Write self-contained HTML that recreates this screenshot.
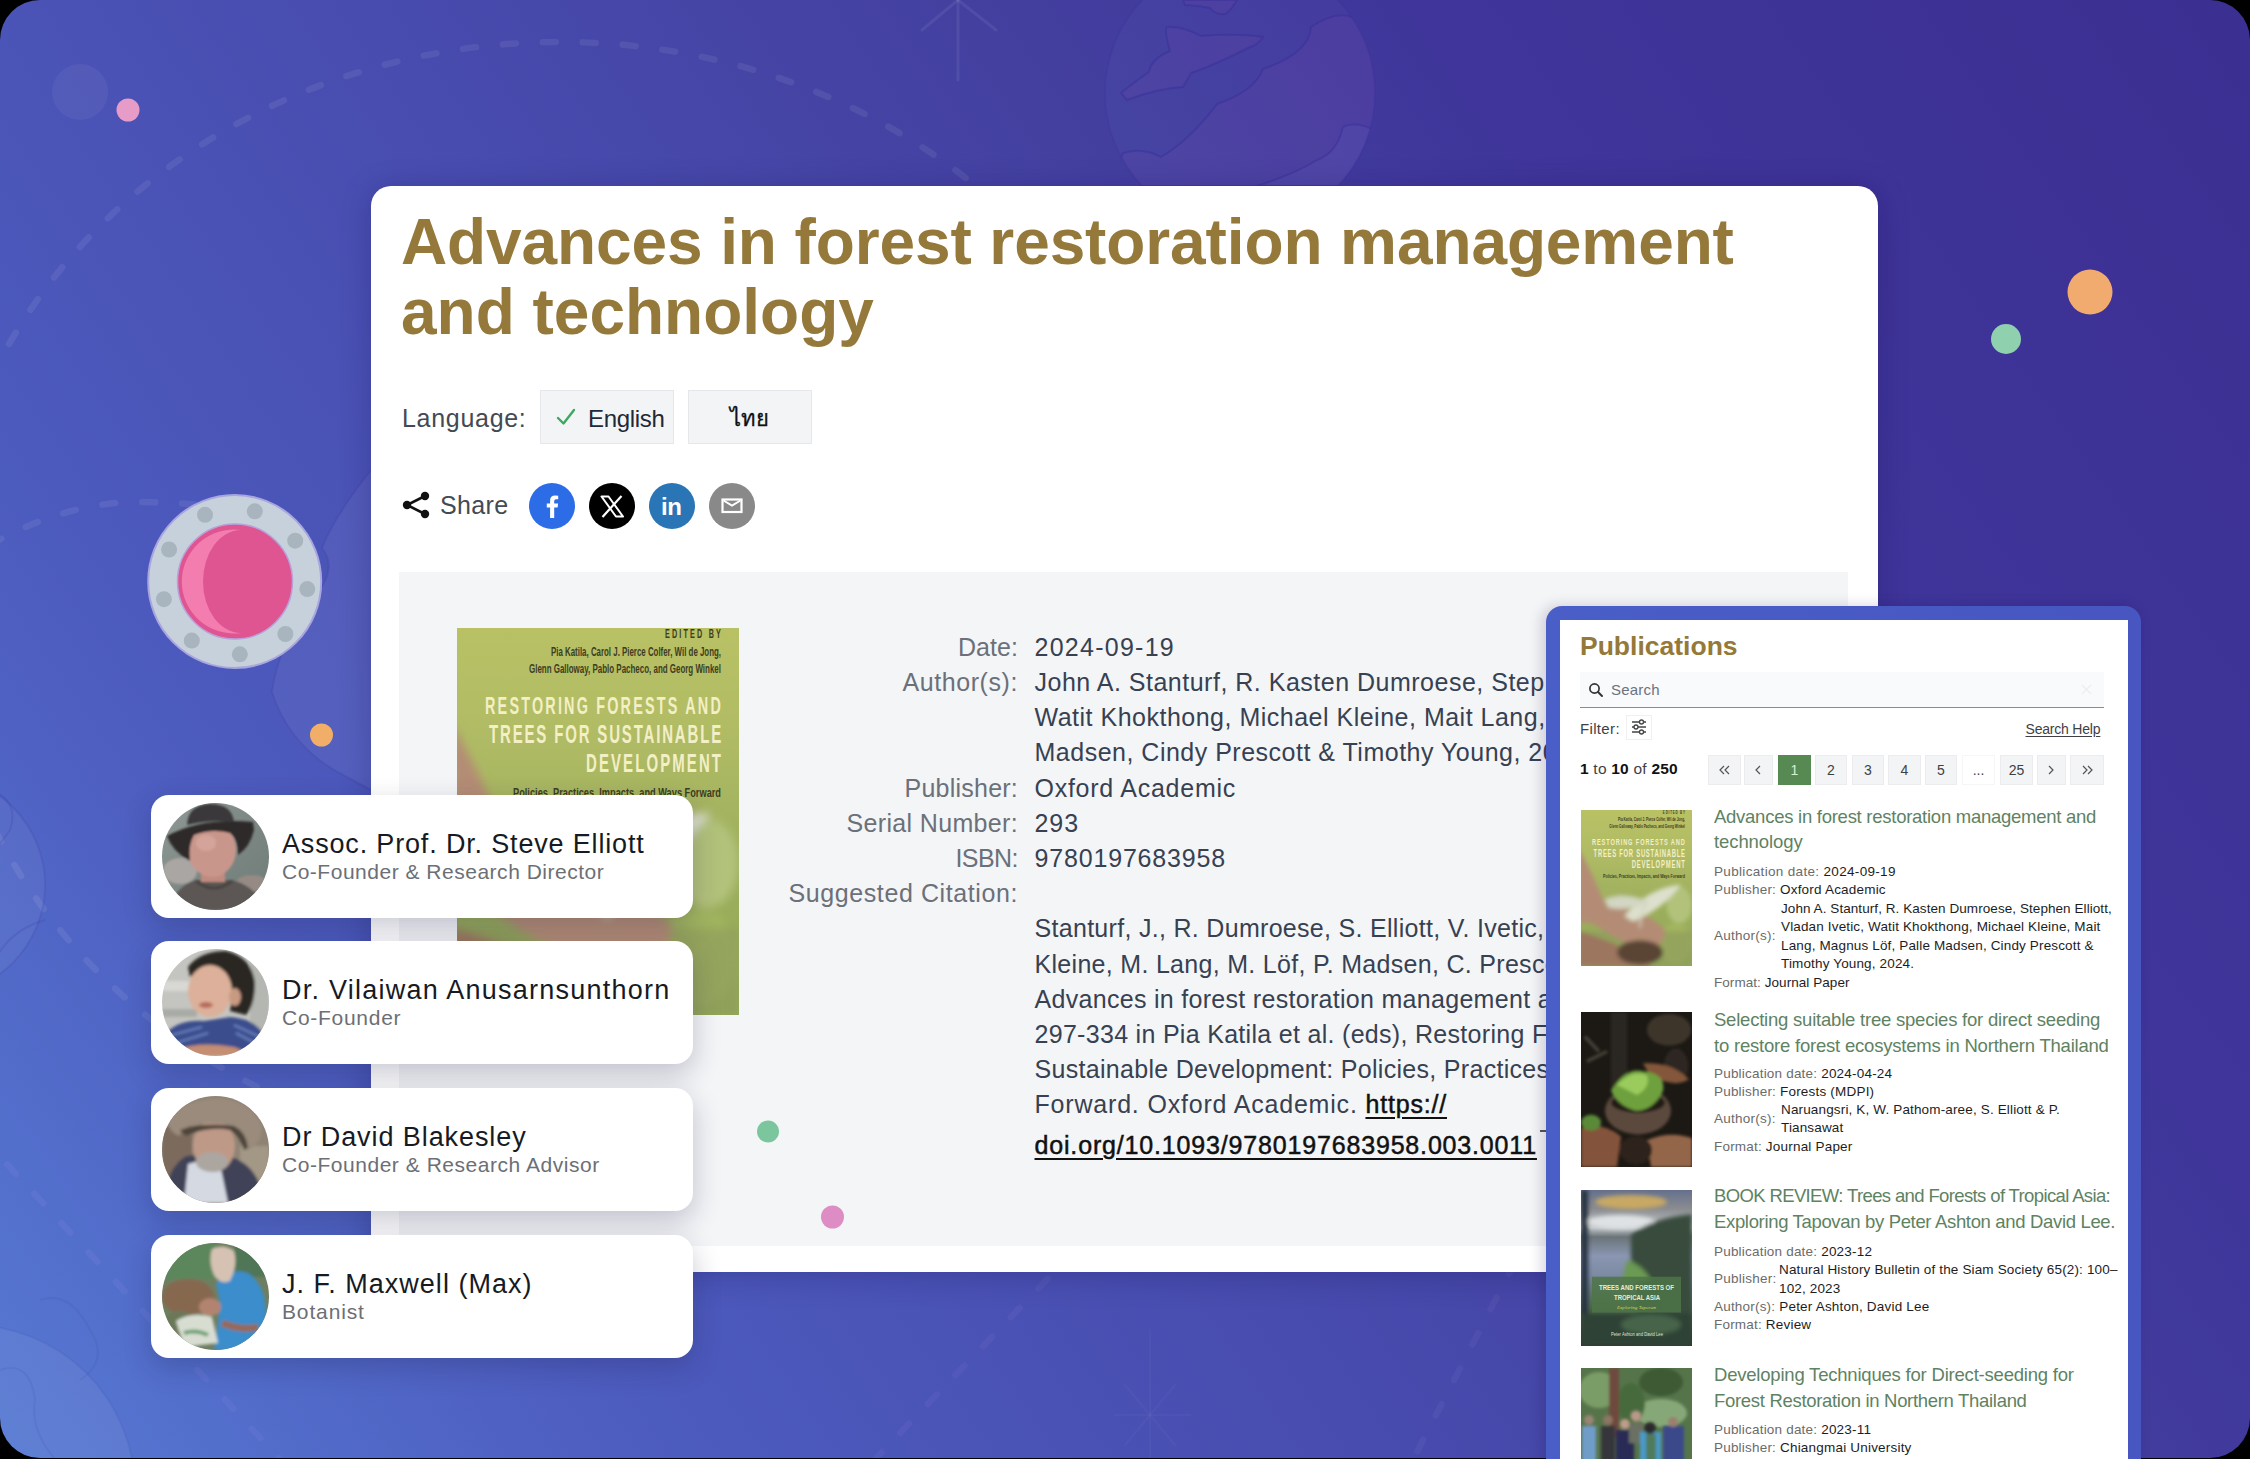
<!DOCTYPE html>
<html><head><meta charset="utf-8"><title>Advances in forest restoration management and technology</title>
<style>
html,body{margin:0;padding:0;}
body{width:2250px;height:1459px;overflow:hidden;background:#000;position:relative;font-family:"Liberation Sans",sans-serif;}
.abs{position:absolute;}
.t{position:absolute;line-height:1;white-space:nowrap;}
#bg{position:absolute;left:0;top:0;width:2250px;height:1458px;border-radius:40px;overflow:hidden;
 background:linear-gradient(55deg,#5679d3 0%,#4d5cbf 20%,#4a52b5 33%,#433f9f 62%,#3f359a 75%,#3c2f92 100%);}
#card{position:absolute;left:371px;top:186px;width:1507px;height:1086px;background:#fff;border-radius:20px;box-shadow:0 4px 30px rgba(20,10,80,.25);}
#grey{position:absolute;left:399px;top:572px;width:1449px;height:674px;background:#f4f5f7;}
.pcard{position:absolute;left:151px;width:542px;height:123px;background:#fff;border-radius:18px;box-shadow:0 10px 28px rgba(30,30,70,.24);z-index:5;}
.av{position:absolute;left:11px;top:8px;width:107px;height:107px;border-radius:50%;overflow:hidden;}
#pubs{position:absolute;left:1546px;top:606px;width:595px;height:900px;background:linear-gradient(90deg,#4a5ec8,#4756c0);border-radius:16px;box-shadow:-4px 0 14px rgba(20,10,60,.18);z-index:5;}
#pubsin{position:absolute;left:14px;top:14px;width:568px;height:900px;background:#fff;}
.btn{position:absolute;background:#f3f4f6;border:1px solid #e5e7eb;box-sizing:border-box;}
.circ{position:absolute;width:46px;height:46px;border-radius:50%;top:483px;}
.pg{position:absolute;top:755px;height:30px;background:#f3f4f6;box-sizing:border-box;border:1px solid #ececee;font-size:14px;color:#3f3f46;text-align:center;line-height:29px;z-index:6;}
.thumb{position:absolute;left:1580.5px;width:111px;z-index:6;overflow:hidden;}
</style></head>
<body>
<div id="bg"><svg class="abs" style="left:0;top:0" width="2250" height="1459" viewBox="0 0 2250 1459">
<g fill="none" stroke="rgba(255,255,255,0.075)" stroke-width="6.5" stroke-linecap="round">
<ellipse cx="560" cy="600" rx="620" ry="558" stroke-dasharray="13 27"/>
<path d="M-10 545 Q60 505 130 502 Q170 502 200 505" stroke-dasharray="13 27"/>
<path d="M-20 1135 L290 1470" stroke="rgba(230,190,255,0.06)" stroke-dasharray="13 27"/>
<path d="M1075 1250 L860 1475" stroke="rgba(230,190,255,0.05)" stroke-dasharray="13 27"/>
<path d="M1515 1262 L1405 1475" stroke="rgba(230,190,255,0.05)" stroke-dasharray="13 27"/>
</g>
<circle cx="80" cy="92" r="28" fill="rgba(255,255,255,0.05)"/>
<circle cx="128" cy="110" r="11.5" fill="#e79cc8"/>
<circle cx="2090" cy="292" r="22.5" fill="#f2ab6e"/>
<circle cx="2006" cy="339" r="15" fill="#8fd0af"/>
<circle cx="321.5" cy="735" r="11.5" fill="#f1aa60"/>
<!-- star top -->
<g stroke="rgba(255,255,255,0.07)" stroke-width="3" stroke-linecap="round">
<path d="M958 -10 L958 80"/><path d="M958 0 L922 30"/><path d="M958 0 L996 30"/>
</g>
<g stroke="rgba(255,255,255,0.025)" stroke-width="2.5" stroke-linecap="round">
<path d="M1150 1330 L1150 1459"/><path d="M1115 1415 L1190 1415"/><path d="M1125 1385 L1175 1445"/><path d="M1175 1385 L1125 1445"/>
</g>
<!-- globe top -->
<defs><clipPath id="gclip"><circle cx="1240" cy="93" r="135"/></clipPath></defs>
<g clip-path="url(#gclip)">
<circle cx="1240" cy="93" r="135" fill="rgba(110,130,220,0.08)"/>
<path d="M1121 93 Q1137 80 1149 72 Q1151 59 1170 51 Q1164 30 1167 27 Q1183 26 1201 36 Q1237 33 1263 37 Q1258 45 1250 47 Q1217 64 1191 73 Q1183 87 1183 87 Q1159 88 1127 100 Z" fill="rgba(150,80,180,0.10)" stroke="rgba(50,35,150,0.30)" stroke-width="2"/>
<path d="M1110 186 L1123 153 Q1143 147 1161 157 Q1190 140 1217 104 Q1255 91 1263 69 Q1310 53 1311 27 Q1341 7 1358 21 Q1370 40 1380 60 L1380 186 Z" fill="rgba(150,80,180,0.10)" stroke="rgba(50,35,150,0.30)" stroke-width="2"/>
<path d="M1257 186 Q1297 173 1317 160 Q1337 153 1343 127 Q1357 120 1380 133 L1380 186 Z" fill="rgba(110,130,220,0.10)" stroke="rgba(50,35,150,0.30)" stroke-width="2"/>
<path d="M1183 0 L1237 0 Q1230 12 1225 14 Q1215 15 1210 8 Q1195 5 1185 5 Z" fill="rgba(150,80,180,0.10)" stroke="rgba(50,35,150,0.30)" stroke-width="2"/>
</g>
<circle cx="1240" cy="93" r="135" fill="none" stroke="rgba(60,50,160,0.20)" stroke-width="2"/>
<!-- globe left mid behind porthole -->
<path d="M375 465 Q335 515 322 548 Q338 568 316 595 Q278 645 272 692 Q290 748 345 776 L375 792 Z" fill="rgba(255,255,255,0.05)" stroke="rgba(60,50,150,0.18)" stroke-width="2"/>
<!-- globe left -->
<g>
<circle cx="-65" cy="885" r="110" fill="rgba(255,255,255,0.05)" stroke="rgba(60,60,160,0.18)" stroke-width="2"/>
<path d="M-10 790 Q20 800 10 830 Q-5 850 -10 860" fill="none" stroke="rgba(60,60,160,0.2)" stroke-width="2"/>
<path d="M45 920 Q10 930 -5 960" fill="none" stroke="rgba(60,60,160,0.2)" stroke-width="2"/>
</g>
<g>
<circle cx="-30" cy="1490" r="165" fill="rgba(255,255,255,0.06)" stroke="rgba(60,80,170,0.15)" stroke-width="2"/>
<path d="M0 1370 Q30 1360 35 1400 Q30 1430 55 1459" fill="none" stroke="rgba(60,80,170,0.15)" stroke-width="2"/>
<path d="M40 1300 Q70 1290 90 1330 Q110 1360 80 1380" fill="none" stroke="rgba(60,80,170,0.15)" stroke-width="2"/>
</g>
</svg></div>
<svg class="abs" style="left:0;top:0" width="2250" height="1459" viewBox="0 0 2250 1459">
<circle cx="234.7" cy="581.5" r="86.5" fill="#c6d1db" stroke="#a9a6df" stroke-width="2"/>
<circle cx="205.0" cy="514.8" r="8" fill="#a8b5be"/><circle cx="254.8" cy="511.3" r="8" fill="#a8b5be"/><circle cx="295.2" cy="540.7" r="8" fill="#a8b5be"/><circle cx="307.3" cy="589.1" r="8" fill="#a8b5be"/><circle cx="285.4" cy="634.0" r="8" fill="#a8b5be"/><circle cx="239.8" cy="654.3" r="8" fill="#a8b5be"/><circle cx="191.8" cy="640.6" r="8" fill="#a8b5be"/><circle cx="163.9" cy="599.2" r="8" fill="#a8b5be"/><circle cx="169.1" cy="549.5" r="8" fill="#a8b5be"/>
<circle cx="235" cy="581.5" r="57.5" fill="#df5591" stroke="#b8a0d8" stroke-width="1.5"/>
<path d="M241 530 A52 52 0 1 0 241 633 A38 51.5 0 0 1 241 530 Z" fill="#f37daf"/>
</svg>
<div id="card"></div><div id="grey"></div>
<div class="btn" style="left:540px;top:390px;width:134px;height:54px"></div>
<svg class="abs" style="left:555px;top:407px" width="22" height="20" viewBox="0 0 22 20"><path d="M3 11 L8.5 16.5 L19 3" fill="none" stroke="#3da85f" stroke-width="2.4" stroke-linecap="round" stroke-linejoin="round"/></svg>
<div class="btn" style="left:688px;top:390px;width:124px;height:54px"></div>
<div class="t" style="left:730px;top:408px;font-size:22px;color:#111;-webkit-text-stroke:0.3px #111">ไทย</div>
<svg class="abs" style="left:401px;top:490px" width="30" height="30" viewBox="0 0 30 30"><g fill="#111"><circle cx="24" cy="6" r="4.2"/><circle cx="6" cy="15" r="4.2"/><circle cx="24" cy="24" r="4.2"/></g><path d="M24 6 L6 15 L24 24" fill="none" stroke="#111" stroke-width="2.6"/></svg>
<div class="circ" style="left:529px;background:#2c6ce6"></div>
<svg class="abs" style="left:529px;top:483px" width="46" height="46" viewBox="0 0 46 46"><path d="M25.2 35 V24.5 H28.6 L29.1 20.5 H25.2 V18 Q25.2 16.3 27.1 16.3 H29.2 V12.7 Q27.7 12.5 26.2 12.5 Q21.1 12.5 21.1 17.6 V20.5 H17.8 V24.5 H21.1 V35 Z" fill="#fff"/></svg>
<div class="circ" style="left:589px;background:#000"></div>
<svg class="abs" style="left:589px;top:483px" width="46" height="46" viewBox="0 0 46 46"><path d="M12.5 13.5 L19.5 13.5 L34 33.5 L27 33.5 Z" fill="none" stroke="#fff" stroke-width="2" stroke-linejoin="round"/><path d="M32.5 13 L13.5 34" stroke="#fff" stroke-width="2.2"/></svg>
<div class="circ" style="left:649px;background:#2a75b6"></div>
<div class="t" style="left:661px;top:494.5px;font-size:24px;color:#fff;font-weight:bold;letter-spacing:-0.5px">in</div>
<div class="circ" style="left:709px;background:#898989"></div>
<svg class="abs" style="left:709px;top:483px" width="46" height="46" viewBox="0 0 46 46"><rect x="13.5" y="16.5" width="19" height="12.5" fill="none" stroke="#fff" stroke-width="2.2"/><path d="M14.5 17.5 L23 22.5 L31.5 17.5" fill="none" stroke="#fff" stroke-width="2"/></svg>
<div class="abs" style="left:457px;top:628px;width:282px;height:387px"><svg width="100%" height="100%" viewBox="0 0 282 387" preserveAspectRatio="none">
<defs>
<linearGradient id="c1g" x1="0" y1="0" x2="0" y2="1">
<stop offset="0" stop-color="#b9c164"/><stop offset="0.3" stop-color="#afbb64"/><stop offset="0.6" stop-color="#9cae5c"/><stop offset="1" stop-color="#94aa58"/></linearGradient>
<filter id="c1b"><feGaussianBlur stdDeviation="5"/></filter>
<filter id="c1b2"><feGaussianBlur stdDeviation="2"/></filter>
</defs>
<rect width="282" height="387" fill="url(#c1g)"/>
<g filter="url(#c1b)">
<ellipse cx="60" cy="205" rx="50" ry="22" fill="#a3b260"/>
<ellipse cx="250" cy="235" rx="32" ry="45" fill="#b2c27a"/>
<ellipse cx="240" cy="330" rx="40" ry="50" fill="#a2b55f"/>
<rect x="0" y="300" width="282" height="87" fill="#8c9a5c" opacity="0.6"/>
<path d="M-5 95 Q30 160 62 232 Q108 240 157 258 Q195 275 216 300 Q205 340 170 352 Q110 330 60 300 Q20 270 -5 280 Z" fill="#b48c74"/>
<path d="M-5 300 Q60 318 120 348 Q170 368 178 387 L-5 387 Z" fill="#9c765e"/>
<ellipse cx="150" cy="352" rx="58" ry="30" fill="#5a4434"/>
<path d="M110 262 Q170 192 254 184 Q212 242 132 276 Z" fill="#dde0cc"/>
<path d="M60 222 Q110 200 172 226 Q122 252 70 242 Z" fill="#d2d6c2"/>
<path d="M150 290 Q150 250 170 225" stroke="#cfd3bd" stroke-width="5" fill="none"/>
</g>
<g fill="#3d3d22" font-family="Liberation Sans" font-weight="bold">
<g transform="scale(0.6,1)"><text x="346.7" y="10" font-size="12" textLength="93" lengthAdjust="spacing">EDITED BY</text></g>
<text x="94" y="28" font-size="12" textLength="170" lengthAdjust="spacingAndGlyphs">Pia Katila, Carol J. Pierce Colfer, Wil de Jong,</text>
<text x="72" y="45" font-size="12" textLength="192" lengthAdjust="spacingAndGlyphs">Glenn Galloway, Pablo Pacheco, and Georg Winkel</text>
<text x="56" y="169" font-size="12" textLength="208" lengthAdjust="spacingAndGlyphs">Policies, Practices, Impacts, and Ways Forward</text>
</g>
<g fill="#f3efc6" font-family="Liberation Sans" font-weight="bold" transform="scale(0.6,1)">
<text x="46.7" y="86" font-size="24" textLength="393" lengthAdjust="spacing">RESTORING FORESTS AND</text>
<text x="53.3" y="115" font-size="25" textLength="387" lengthAdjust="spacing">TREES FOR SUSTAINABLE</text>
<text x="215" y="144" font-size="25" textLength="225" lengthAdjust="spacing">DEVELOPMENT</text>
</g>
</svg></div>
<svg class="abs" style="left:1538px;top:1129px" width="12" height="14" viewBox="0 0 12 14"><path d="M2 2 H9 V10" fill="none" stroke="#222" stroke-width="1.6"/></svg>
<div class="pcard" style="top:795px"><svg class="av" viewBox="0 0 107 107">
<defs><linearGradient id="a1bg" x1="0" y1="0" x2="1" y2="1"><stop offset="0" stop-color="#8f9894"/><stop offset="0.5" stop-color="#7d8884"/><stop offset="1" stop-color="#6e7b77"/></linearGradient>
<filter id="bl1"><feGaussianBlur stdDeviation="1.3"/></filter></defs>
<rect width="107" height="107" fill="url(#a1bg)"/>
<g filter="url(#bl1)">
<ellipse cx="18" cy="68" rx="17" ry="13" fill="#aaa6a3"/>
<ellipse cx="90" cy="80" rx="16" ry="8" fill="#958a84"/>
<path d="M8 107 Q12 84 34 77 L70 77 Q96 84 102 107 Z" fill="#5b5755"/>
<path d="M34 78 Q52 92 70 78" fill="none" stroke="#4a4443" stroke-width="3"/>
<rect x="39" y="62" width="24" height="17" fill="#c08a80"/>
<ellipse cx="50" cy="47" rx="24" ry="27" fill="#c9968c"/>
<ellipse cx="44" cy="40" rx="10" ry="8" fill="#d4a49a"/>
<path d="M5 33 Q40 14 91 19 L92 27 Q88 44 76 52 Q76 36 68 30 Q50 25 32 32 Q26 42 28 58 Q10 48 5 33 Z" fill="#2d292b"/>
<path d="M25 22 Q26 2 48 1 Q70 1 72 19 Q50 16 25 22 Z" fill="#3a383a"/>
</g></svg></div>
<div class="pcard" style="top:941px"><svg class="av" viewBox="0 0 107 107">
<defs><filter id="bl2"><feGaussianBlur stdDeviation="1.4"/></filter></defs>
<rect width="107" height="107" fill="#c4c5c0"/>
<g filter="url(#bl2)">
<rect x="0" y="32" width="35" height="10" fill="#d8d9d4"/>
<rect x="0" y="60" width="35" height="8" fill="#a9aba6"/>
<rect x="88" y="10" width="19" height="80" fill="#b4b6b1"/>
<path d="M26 18 Q38 2 64 2 Q90 8 93 34 Q93 56 84 66 L68 62 Q72 40 62 26 Q46 16 28 28 Z" fill="#2a2522"/>
<ellipse cx="48" cy="42" rx="22" ry="26" fill="#dcb09a"/>
<ellipse cx="73" cy="48" rx="6" ry="9" fill="#c89a82"/>
<ellipse cx="44" cy="56" rx="7" ry="3" fill="#b86a5c"/>
<path d="M4 84 Q18 70 42 72 L68 68 Q96 70 104 90 L104 107 L4 107 Z" fill="#3a4e8c"/>
<path d="M10 86 L40 78 M14 94 L46 84 M72 76 L98 88 M74 84 L100 98" stroke="#6a80c0" stroke-width="2"/>
<path d="M16 100 Q40 92 72 98 Q84 102 86 107 L18 107 Z" fill="#c58d72"/>
</g></svg></div>
<div class="pcard" style="top:1088px"><svg class="av" viewBox="0 0 107 107">
<defs><filter id="bl3"><feGaussianBlur stdDeviation="1.4"/></filter></defs>
<rect width="107" height="107" fill="#8f8373"/>
<g filter="url(#bl3)">
<rect x="0" y="30" width="30" height="50" fill="#7c6b5d"/>
<rect x="78" y="50" width="29" height="45" fill="#a39886"/>
<path d="M2 107 Q4 72 24 60 L44 58 L72 62 Q98 72 102 107 Z" fill="#3f4258"/>
<path d="M22 107 L26 68 Q42 62 58 68 L66 107 Z" fill="#d4d9e2"/>
<ellipse cx="52" cy="50" rx="21" ry="26" fill="#bf9987"/>
<ellipse cx="50" cy="66" rx="16" ry="10" fill="#aca6a1"/>
<path d="M6 24 Q18 4 56 2 Q90 4 100 30 Q100 48 86 54 Q84 38 72 30 Q48 24 28 30 Q18 34 18 40 Q6 36 6 24 Z" fill="#9a8b7b"/>
<path d="M18 34 Q40 26 72 30 Q84 36 86 52 L82 54 Q78 40 68 34 Q46 30 24 40 Z" fill="#4e443a"/>
</g></svg></div>
<div class="pcard" style="top:1235px"><svg class="av" viewBox="0 0 107 107">
<defs><filter id="bl4"><feGaussianBlur stdDeviation="1.6"/></filter></defs>
<rect width="107" height="107" fill="#6f7e60"/>
<g filter="url(#bl4)">
<rect x="0" y="0" width="55" height="36" fill="#5b875c"/>
<rect x="72" y="0" width="35" height="34" fill="#4f7656"/>
<ellipse cx="26" cy="54" rx="26" ry="18" fill="#86684f"/>
<ellipse cx="18" cy="78" rx="14" ry="10" fill="#6b7858"/>
<path d="M54 40 Q68 24 86 30 Q104 42 104 70 L100 107 L52 107 Q56 80 58 60 Z" fill="#3a8dcb"/>
<path d="M50 6 Q62 0 72 8 Q76 22 68 38 Q58 42 52 32 Q46 18 50 6 Z" fill="#d6c2b2"/>
<path d="M14 78 Q30 68 50 74 L56 100 L22 104 Z" fill="#d8ddd2"/>
<path d="M22 90 Q34 86 46 92" stroke="#6aa070" stroke-width="4" fill="none"/>
<ellipse cx="48" cy="64" rx="11" ry="9" fill="#b28470"/>
<path d="M60 80 Q80 88 96 84" stroke="#97695a" stroke-width="7" fill="none"/>
</g></svg></div>
<svg class="abs" style="left:0;top:0;z-index:4" width="900" height="1300"><circle cx="768" cy="1131.5" r="11" fill="#7cc69e"/><circle cx="832.5" cy="1217" r="11.5" fill="#de8cc4"/></svg>
<div id="pubs"><div id="pubsin"></div></div>
<div class="abs" style="left:1580px;top:672px;width:524px;height:35px;background:#f9fafb;border-bottom:1.5px solid #8c8c8c;z-index:6"></div>
<svg class="abs" style="left:1588px;top:682px;z-index:7" width="16" height="16" viewBox="0 0 16 16"><circle cx="6.5" cy="6.5" r="4.6" fill="none" stroke="#333" stroke-width="1.7"/><path d="M10 10 L14 14" stroke="#333" stroke-width="1.9" stroke-linecap="round"/></svg>
<svg class="abs" style="left:2080px;top:683px;z-index:7" width="13" height="13" viewBox="0 0 13 13"><path d="M2 2 L11 11 M11 2 L2 11" stroke="#eceef1" stroke-width="1.4"/></svg>
<div class="abs" style="left:1626px;top:715px;width:26px;height:25px;border:1px solid #f0f0f2;box-sizing:border-box;z-index:6"></div>
<svg class="abs" style="left:1629px;top:717px;z-index:7" width="20" height="20" viewBox="0 0 20 20"><g stroke="#444" stroke-width="1.3" fill="none"><path d="M3 5 H17 M3 10 H17 M3 15 H17"/></g><g fill="#fff" stroke="#444" stroke-width="1.3"><circle cx="12.5" cy="5" r="2"/><circle cx="7" cy="10" r="2"/><circle cx="12.5" cy="15" r="2"/></g></svg>
<div class="pg" style="left:1708px;width:33px;"><svg width="19" height="18" viewBox="0 0 19 18" style="margin-top:5px"><path d="M9 5 L5 9 L9 13 M14 5 L10 9 L14 13" fill="none" stroke="#555" stroke-width="1.2"/></svg></div>
<div class="pg" style="left:1744px;width:29px;"><svg width="19" height="18" viewBox="0 0 19 18" style="margin-top:5px"><path d="M11 5 L7 9 L11 13" fill="none" stroke="#555" stroke-width="1.2"/></svg></div>
<div class="pg" style="left:1778px;width:33px;background:#578a53;border-color:#578a53;color:#d8f0d0;">1</div>
<div class="pg" style="left:1815px;width:32px;">2</div>
<div class="pg" style="left:1852px;width:32px;">3</div>
<div class="pg" style="left:1888px;width:33px;">4</div>
<div class="pg" style="left:1925px;width:32px;">5</div>
<div class="pg" style="left:1962px;width:33px;background:#fff;border-color:#f6f6f6;">...</div>
<div class="pg" style="left:2000px;width:33px;">25</div>
<div class="pg" style="left:2037px;width:29px;"><svg width="19" height="18" viewBox="0 0 19 18" style="margin-top:5px"><path d="M7 5 L11 9 L7 13" fill="none" stroke="#555" stroke-width="1.2"/></svg></div>
<div class="pg" style="left:2070px;width:34px;"><svg width="19" height="18" viewBox="0 0 19 18" style="margin-top:5px"><path d="M5 5 L9 9 L5 13 M10 5 L14 9 L10 13" fill="none" stroke="#555" stroke-width="1.2"/></svg></div>
<div class="thumb" style="top:809.5px;height:156.5px"><svg width="100%" height="100%" viewBox="0 0 282 387" preserveAspectRatio="none">
<defs>
<linearGradient id="c2g" x1="0" y1="0" x2="0" y2="1">
<stop offset="0" stop-color="#b9c164"/><stop offset="0.3" stop-color="#afbb64"/><stop offset="0.6" stop-color="#9cae5c"/><stop offset="1" stop-color="#94aa58"/></linearGradient>
<filter id="c2b"><feGaussianBlur stdDeviation="5"/></filter>
<filter id="c2b2"><feGaussianBlur stdDeviation="2"/></filter>
</defs>
<rect width="282" height="387" fill="url(#c2g)"/>
<g filter="url(#c2b)">
<ellipse cx="60" cy="205" rx="50" ry="22" fill="#a3b260"/>
<ellipse cx="250" cy="235" rx="32" ry="45" fill="#b2c27a"/>
<ellipse cx="240" cy="330" rx="40" ry="50" fill="#a2b55f"/>
<rect x="0" y="300" width="282" height="87" fill="#8c9a5c" opacity="0.6"/>
<path d="M-5 95 Q30 160 62 232 Q108 240 157 258 Q195 275 216 300 Q205 340 170 352 Q110 330 60 300 Q20 270 -5 280 Z" fill="#b48c74"/>
<path d="M-5 300 Q60 318 120 348 Q170 368 178 387 L-5 387 Z" fill="#9c765e"/>
<ellipse cx="150" cy="352" rx="58" ry="30" fill="#5a4434"/>
<path d="M110 262 Q170 192 254 184 Q212 242 132 276 Z" fill="#dde0cc"/>
<path d="M60 222 Q110 200 172 226 Q122 252 70 242 Z" fill="#d2d6c2"/>
<path d="M150 290 Q150 250 170 225" stroke="#cfd3bd" stroke-width="5" fill="none"/>
</g>
<g fill="#3d3d22" font-family="Liberation Sans" font-weight="bold">
<g transform="scale(0.6,1)"><text x="346.7" y="10" font-size="12" textLength="93" lengthAdjust="spacing">EDITED BY</text></g>
<text x="94" y="28" font-size="12" textLength="170" lengthAdjust="spacingAndGlyphs">Pia Katila, Carol J. Pierce Colfer, Wil de Jong,</text>
<text x="72" y="45" font-size="12" textLength="192" lengthAdjust="spacingAndGlyphs">Glenn Galloway, Pablo Pacheco, and Georg Winkel</text>
<text x="56" y="169" font-size="12" textLength="208" lengthAdjust="spacingAndGlyphs">Policies, Practices, Impacts, and Ways Forward</text>
</g>
<g fill="#f3efc6" font-family="Liberation Sans" font-weight="bold" transform="scale(0.6,1)">
<text x="46.7" y="86" font-size="24" textLength="393" lengthAdjust="spacing">RESTORING FORESTS AND</text>
<text x="53.3" y="115" font-size="25" textLength="387" lengthAdjust="spacing">TREES FOR SUSTAINABLE</text>
<text x="215" y="144" font-size="25" textLength="225" lengthAdjust="spacing">DEVELOPMENT</text>
</g>
</svg></div>
<div class="thumb" style="top:1012px;height:155px"><svg width="100%" height="100%" viewBox="0 0 111 157" preserveAspectRatio="none">
<defs><filter id="t2b"><feGaussianBlur stdDeviation="1.8"/></filter></defs>
<rect width="111" height="157" fill="#1c1914"/>
<g filter="url(#t2b)">
<rect x="30" y="0" width="16" height="80" fill="#2a2620"/>
<path d="M4 25 L18 40 M6 50 L26 40" stroke="#4a463c" stroke-width="3"/>
<ellipse cx="88" cy="18" rx="22" ry="16" fill="#3e352c"/>
<ellipse cx="95" cy="55" rx="12" ry="18" fill="#2e2820"/>
<path d="M62 52 Q90 50 108 68 Q96 76 70 66 Z" fill="#84573a"/>
<ellipse cx="57" cy="100" rx="33" ry="24" fill="#5c4a3c"/>
<ellipse cx="57" cy="92" rx="27" ry="10" fill="#231c16"/>
<path d="M30 80 Q45 55 62 60 Q85 62 82 80 Q72 100 55 100 Q38 96 30 80 Z" fill="#6ea03e"/>
<path d="M36 74 Q50 58 66 64 Q70 76 56 84 Z" fill="#9acb5c"/>
<path d="M0 118 Q20 110 40 126 L36 157 L0 157 Z" fill="#84523a"/>
<path d="M66 130 Q90 120 111 128 L111 157 L70 157 Z" fill="#94664a"/>
<ellipse cx="10" cy="112" rx="10" ry="8" fill="#5a8a38"/>
<ellipse cx="55" cy="140" rx="16" ry="14" fill="#2e241c"/>
</g></svg></div>
<div class="thumb" style="top:1189.5px;height:156.5px"><svg width="100%" height="100%" viewBox="0 0 111 157" preserveAspectRatio="none">
<defs><linearGradient id="t3g" x1="0" y1="0" x2="0" y2="1">
<stop offset="0" stop-color="#64708c"/><stop offset="0.12" stop-color="#8a8c90"/><stop offset="0.24" stop-color="#c4c8cc"/><stop offset="0.3" stop-color="#6a7478"/><stop offset="0.42" stop-color="#8a96b2"/><stop offset="0.55" stop-color="#7c8aa2"/><stop offset="0.75" stop-color="#4e6a50"/><stop offset="1" stop-color="#2a3a30"/></linearGradient>
<filter id="t3b"><feGaussianBlur stdDeviation="2.2"/></filter></defs>
<rect width="111" height="157" fill="url(#t3g)"/>
<g filter="url(#t3b)">
<ellipse cx="50" cy="12" rx="36" ry="7" fill="#c8a864"/>
<ellipse cx="40" cy="32" rx="34" ry="7" fill="#dfe2e4"/>
<path d="M50 45 Q70 28 111 24 L111 157 L55 157 Q60 100 50 70 Z" fill="#384c3e"/>
<path d="M46 70 Q60 74 70 90 L40 95 Z" fill="#6a9a52"/>
<rect x="0" y="0" width="7" height="157" fill="#283040"/>
<rect x="0" y="124" width="111" height="33" fill="#2e4234"/>
<ellipse cx="70" cy="135" rx="30" ry="10" fill="#46644a"/>
</g>
<rect x="11" y="87" width="89" height="36" fill="#4e7446" opacity="0.85"/>
<g fill="#e6eed8" font-family="Liberation Sans" font-weight="bold">
<text x="18" y="100" font-size="7.5" textLength="75" lengthAdjust="spacingAndGlyphs">TREES AND FORESTS OF</text>
<text x="33" y="110" font-size="7.5" textLength="46" lengthAdjust="spacingAndGlyphs">TROPICAL ASIA</text>
</g>
<text x="36" y="119" font-size="5" fill="#c8d860" font-family="Liberation Serif" font-style="italic" textLength="39" lengthAdjust="spacingAndGlyphs">Exploring Tapovan</text>
<text x="30" y="146" font-size="4.5" fill="#e0e0d0" font-family="Liberation Sans" textLength="52" lengthAdjust="spacingAndGlyphs">Peter Ashton and David Lee</text>
</svg></div>
<div class="thumb" style="top:1368px;height:157px"><svg width="100%" height="100%" viewBox="0 0 111 157" preserveAspectRatio="none">
<defs><filter id="t4b"><feGaussianBlur stdDeviation="1.6"/></filter></defs>
<rect width="111" height="157" fill="#56744a"/>
<g filter="url(#t4b)">
<ellipse cx="18" cy="22" rx="20" ry="18" fill="#7a9c66"/>
<ellipse cx="80" cy="14" rx="22" ry="14" fill="#3c5a34"/>
<ellipse cx="80" cy="45" rx="26" ry="14" fill="#86a878"/>
<ellipse cx="50" cy="35" rx="14" ry="20" fill="#466a3c"/>
<rect x="28" y="0" width="10" height="70" fill="#6e4a3c"/>
</g>
<g filter="url(#t4b)">
<rect x="1" y="58" width="14" height="40" fill="#6f9cc8"/>
<circle cx="8" cy="52" r="5" fill="#9a8474"/>
<rect x="20" y="58" width="14" height="40" fill="#34343a"/>
<circle cx="27" cy="52" r="5" fill="#8c7464"/>
<rect x="35" y="62" width="18" height="36" fill="#2c2c56"/>
<circle cx="44" cy="56" r="5" fill="#c09c8a"/>
<rect x="48" y="55" width="14" height="20" fill="#6a7062"/>
<circle cx="55" cy="48" r="5.5" fill="#b89888"/>
<rect x="59" y="64" width="21" height="34" fill="#4a9ac8"/>
<rect x="65" y="66" width="10" height="32" fill="#4f7a5c"/>
<circle cx="69" cy="60" r="6" fill="#2c2a2a"/>
<rect x="82" y="58" width="21" height="40" fill="#3a4a8a"/>
<circle cx="92" cy="54" r="5" fill="#9c806e"/>
</g></svg></div>
<div class="t" id="t0" style="top:209.82px;font-size:64px;color:#94793a;font-weight:bold;left:401.00px;letter-spacing:-0.108px;">Advances in forest restoration management</div>
<div class="t" id="t1" style="top:280.32px;font-size:64px;color:#94793a;font-weight:bold;left:401.00px;letter-spacing:-0.005px;">and technology</div>
<div class="t" id="t2" style="top:405.84px;font-size:25px;color:#434a54;font-weight:normal;left:402.00px;letter-spacing:0.701px;">Language:</div>
<div class="t" id="t3" style="top:406.68px;font-size:24px;color:#1f2937;font-weight:normal;left:588.00px;letter-spacing:-0.326px;">English</div>
<div class="t" id="t4" style="top:492.84px;font-size:25px;color:#434a54;font-weight:normal;left:440.00px;letter-spacing:0.356px;">Share</div>
<div class="t" id="t5" style="top:634.84px;font-size:25px;color:#6b7079;font-weight:normal;right:1232.00px;text-align:right;letter-spacing:0.047px;">Date:</div>
<div class="t" id="t6" style="top:670.04px;font-size:25px;color:#6b7079;font-weight:normal;right:1232.00px;text-align:right;letter-spacing:0.573px;">Author(s):</div>
<div class="t" id="t7" style="top:775.64px;font-size:25px;color:#6b7079;font-weight:normal;right:1232.00px;text-align:right;letter-spacing:0.233px;">Publisher:</div>
<div class="t" id="t8" style="top:810.84px;font-size:25px;color:#6b7079;font-weight:normal;right:1232.00px;text-align:right;letter-spacing:0.340px;">Serial Number:</div>
<div class="t" id="t9" style="top:846.04px;font-size:25px;color:#6b7079;font-weight:normal;right:1232.00px;text-align:right;letter-spacing:-0.559px;">ISBN:</div>
<div class="t" id="t10" style="top:881.24px;font-size:25px;color:#6b7079;font-weight:normal;right:1232.00px;text-align:right;letter-spacing:0.595px;">Suggested Citation:</div>
<div class="t" id="t11" style="top:634.84px;font-size:25px;color:#374151;font-weight:normal;left:1034.50px;letter-spacing:1.261px;">2024-09-19</div>
<div class="t" id="t12" style="top:670.04px;font-size:25px;color:#374151;font-weight:normal;left:1034.50px;letter-spacing:0.500px;">John A. Stanturf, R. Kasten Dumroese, Stephen Elliott, Vladan Ivetic,</div>
<div class="t" id="t13" style="top:705.24px;font-size:25px;color:#374151;font-weight:normal;left:1034.50px;letter-spacing:0.500px;">Watit Khokthong, Michael Kleine, Mait Lang, Magnus Löf, Palle</div>
<div class="t" id="t14" style="top:740.44px;font-size:25px;color:#374151;font-weight:normal;left:1034.50px;letter-spacing:0.500px;">Madsen, Cindy Prescott &amp; Timothy Young, 2024.</div>
<div class="t" id="t15" style="top:775.64px;font-size:25px;color:#374151;font-weight:normal;left:1034.50px;letter-spacing:0.743px;">Oxford Academic</div>
<div class="t" id="t16" style="top:810.84px;font-size:25px;color:#374151;font-weight:normal;left:1034.50px;letter-spacing:0.927px;">293</div>
<div class="t" id="t17" style="top:846.04px;font-size:25px;color:#374151;font-weight:normal;left:1034.50px;letter-spacing:0.827px;">9780197683958</div>
<div class="t" id="t18" style="top:916.44px;font-size:25px;color:#374151;font-weight:normal;left:1034.50px;letter-spacing:0.300px;">Stanturf, J., R. Dumroese, S. Elliott, V. Ivetic, W. Khokthong, M.</div>
<div class="t" id="t19" style="top:951.64px;font-size:25px;color:#374151;font-weight:normal;left:1034.50px;letter-spacing:0.300px;">Kleine, M. Lang, M. Löf, P. Madsen, C. Prescott &amp; T. Young. 2024.</div>
<div class="t" id="t20" style="top:986.84px;font-size:25px;color:#374151;font-weight:normal;left:1034.50px;letter-spacing:0.300px;">Advances in forest restoration management and technology. Pages</div>
<div class="t" id="t21" style="top:1022.04px;font-size:25px;color:#374151;font-weight:normal;left:1034.50px;letter-spacing:0.300px;">297-334 in Pia Katila et al. (eds), Restoring Forests and Trees for</div>
<div class="t" id="t22" style="top:1057.24px;font-size:25px;color:#374151;font-weight:normal;left:1034.50px;letter-spacing:0.300px;">Sustainable Development: Policies, Practices, Impacts, and Ways</div>
<div class="t" id="t23" style="top:1092.44px;font-size:25px;color:#374151;font-weight:normal;left:1034.50px;letter-spacing:0.812px;">Forward. Oxford Academic. <span style="color:#111;text-decoration:underline;text-decoration-thickness:1.5px;text-underline-offset:4px;-webkit-text-stroke:0.5px #111">https://</span></div>
<div class="t" id="t24" style="top:1132.84px;font-size:25px;color:#111;font-weight:normal;left:1034.50px;letter-spacing:0.833px;"><span style="text-decoration:underline;text-decoration-thickness:1.5px;text-underline-offset:4px;-webkit-text-stroke:0.5px #111">doi.org/10.1093/9780197683958.003.0011</span></div>
<div class="t" id="t25" style="top:831.14px;font-size:27px;color:#161a22;font-weight:normal;left:282.00px;letter-spacing:0.833px;z-index:6">Assoc. Prof. Dr. Steve Elliott</div>
<div class="t" id="t26" style="top:861.22px;font-size:21px;color:#6c6f75;font-weight:normal;left:282.00px;letter-spacing:0.510px;z-index:6">Co-Founder &amp; Research Director</div>
<div class="t" id="t27" style="top:977.14px;font-size:27px;color:#161a22;font-weight:normal;left:282.00px;letter-spacing:1.246px;z-index:6">Dr. Vilaiwan Anusarnsunthorn</div>
<div class="t" id="t28" style="top:1007.22px;font-size:21px;color:#6c6f75;font-weight:normal;left:282.00px;letter-spacing:0.720px;z-index:6">Co-Founder</div>
<div class="t" id="t29" style="top:1124.14px;font-size:27px;color:#161a22;font-weight:normal;left:282.00px;letter-spacing:0.919px;z-index:6">Dr David Blakesley</div>
<div class="t" id="t30" style="top:1154.22px;font-size:21px;color:#6c6f75;font-weight:normal;left:282.00px;letter-spacing:0.533px;z-index:6">Co-Founder &amp; Research Advisor</div>
<div class="t" id="t31" style="top:1271.14px;font-size:27px;color:#161a22;font-weight:normal;left:282.00px;letter-spacing:1.031px;z-index:6">J. F. Maxwell (Max)</div>
<div class="t" id="t32" style="top:1301.22px;font-size:21px;color:#6c6f75;font-weight:normal;left:282.00px;letter-spacing:0.859px;z-index:6">Botanist</div>
<div class="t" id="t33" style="top:632.57px;font-size:26.5px;color:#94793a;font-weight:bold;left:1580.00px;letter-spacing:0.002px;z-index:6">Publications</div>
<div class="t" id="t34" style="top:681.80px;font-size:15px;color:#6b7280;font-weight:normal;left:1611.00px;letter-spacing:0.228px;z-index:6">Search</div>
<div class="t" id="t35" style="top:720.80px;font-size:15px;color:#3f3f46;font-weight:normal;left:1580.00px;letter-spacing:0.343px;z-index:6">Filter:</div>
<div class="t" id="t36" style="top:722.15px;font-size:14px;color:#3f3f46;font-weight:normal;left:2025.50px;letter-spacing:-0.201px;z-index:6;text-decoration:underline;text-underline-offset:2px">Search Help</div>
<div class="t" id="t37" style="top:761.38px;font-size:15.5px;color:#3f3f46;font-weight:normal;left:1580.00px;letter-spacing:0.220px;z-index:6"><b style="color:#111">1</b> to <b style="color:#111">10</b> of <b style="color:#111">250</b></div>
<div class="t" id="t38" style="top:808.04px;font-size:18.5px;color:#5e8262;font-weight:normal;left:1714.00px;letter-spacing:-0.261px;z-index:6">Advances in forest restoration management and</div>
<div class="t" id="t39" style="top:833.04px;font-size:18.5px;color:#5e8262;font-weight:normal;left:1714.00px;letter-spacing:-0.087px;z-index:6">technology</div>
<div class="t" id="t40" style="top:864.57px;font-size:13.5px;color:#1d1d1d;font-weight:normal;left:1714.00px;letter-spacing:0.327px;z-index:6"><span style="color:#6b6b6b">Publication date:</span> 2024-09-19</div>
<div class="t" id="t41" style="top:883.07px;font-size:13.5px;color:#1d1d1d;font-weight:normal;left:1714.00px;letter-spacing:0.201px;z-index:6"><span style="color:#6b6b6b">Publisher:</span> Oxford Academic</div>
<div class="t" id="t42" style="top:901.57px;font-size:13.5px;color:#1d1d1d;font-weight:normal;left:1781.00px;letter-spacing:0.067px;z-index:6">John A. Stanturf, R. Kasten Dumroese, Stephen Elliott,</div>
<div class="t" id="t43" style="top:920.07px;font-size:13.5px;color:#1d1d1d;font-weight:normal;left:1781.00px;letter-spacing:0.150px;z-index:6">Vladan Ivetic, Watit Khokthong, Michael Kleine, Mait</div>
<div class="t" id="t44" style="top:938.57px;font-size:13.5px;color:#1d1d1d;font-weight:normal;left:1781.00px;letter-spacing:0.150px;z-index:6">Lang, Magnus Löf, Palle Madsen, Cindy Prescott &amp;</div>
<div class="t" id="t45" style="top:957.07px;font-size:13.5px;color:#1d1d1d;font-weight:normal;left:1781.00px;letter-spacing:0.150px;z-index:6">Timothy Young, 2024.</div>
<div class="t" id="t46" style="top:929.07px;font-size:13.5px;color:#6b6b6b;font-weight:normal;left:1714.00px;letter-spacing:0.250px;z-index:6">Author(s):</div>
<div class="t" id="t47" style="top:975.57px;font-size:13.5px;color:#1d1d1d;font-weight:normal;left:1714.00px;letter-spacing:0.057px;z-index:6"><span style="color:#6b6b6b">Format:</span> Journal Paper</div>
<div class="t" id="t48" style="top:1010.54px;font-size:18.5px;color:#5e8262;font-weight:normal;left:1714.00px;letter-spacing:-0.217px;z-index:6">Selecting suitable tree species for direct seeding</div>
<div class="t" id="t49" style="top:1036.54px;font-size:18.5px;color:#5e8262;font-weight:normal;left:1714.00px;letter-spacing:-0.206px;z-index:6">to restore forest ecosystems in Northern Thailand</div>
<div class="t" id="t50" style="top:1067.07px;font-size:13.5px;color:#1d1d1d;font-weight:normal;left:1714.00px;letter-spacing:0.200px;z-index:6"><span style="color:#6b6b6b">Publication date:</span> 2024-04-24</div>
<div class="t" id="t51" style="top:1084.57px;font-size:13.5px;color:#1d1d1d;font-weight:normal;left:1714.00px;letter-spacing:0.200px;z-index:6"><span style="color:#6b6b6b">Publisher:</span> Forests (MDPI)</div>
<div class="t" id="t52" style="top:1102.57px;font-size:13.5px;color:#1d1d1d;font-weight:normal;left:1781.00px;letter-spacing:0.150px;z-index:6">Naruangsri, K, W. Pathom-aree, S. Elliott &amp; P.</div>
<div class="t" id="t53" style="top:1121.07px;font-size:13.5px;color:#1d1d1d;font-weight:normal;left:1781.00px;letter-spacing:0.150px;z-index:6">Tiansawat</div>
<div class="t" id="t54" style="top:1111.57px;font-size:13.5px;color:#6b6b6b;font-weight:normal;left:1714.00px;letter-spacing:0.250px;z-index:6">Author(s):</div>
<div class="t" id="t55" style="top:1139.57px;font-size:13.5px;color:#1d1d1d;font-weight:normal;left:1714.00px;letter-spacing:0.200px;z-index:6"><span style="color:#6b6b6b">Format:</span> Journal Paper</div>
<div class="t" id="t56" style="top:1187.04px;font-size:18.5px;color:#5e8262;font-weight:normal;left:1714.00px;letter-spacing:-0.630px;z-index:6">BOOK REVIEW: Trees and Forests of Tropical Asia:</div>
<div class="t" id="t57" style="top:1213.04px;font-size:18.5px;color:#5e8262;font-weight:normal;left:1714.00px;letter-spacing:-0.336px;z-index:6">Exploring Tapovan by Peter Ashton and David Lee.</div>
<div class="t" id="t58" style="top:1244.57px;font-size:13.5px;color:#1d1d1d;font-weight:normal;left:1714.00px;letter-spacing:0.200px;z-index:6"><span style="color:#6b6b6b">Publication date:</span> 2023-12</div>
<div class="t" id="t59" style="top:1263.07px;font-size:13.5px;color:#1d1d1d;font-weight:normal;left:1779.00px;letter-spacing:0.150px;z-index:6">Natural History Bulletin of the Siam Society 65(2): 100–</div>
<div class="t" id="t60" style="top:1281.57px;font-size:13.5px;color:#1d1d1d;font-weight:normal;left:1779.00px;letter-spacing:0.150px;z-index:6">102, 2023</div>
<div class="t" id="t61" style="top:1272.07px;font-size:13.5px;color:#6b6b6b;font-weight:normal;left:1714.00px;letter-spacing:0.250px;z-index:6">Publisher:</div>
<div class="t" id="t62" style="top:1299.57px;font-size:13.5px;color:#1d1d1d;font-weight:normal;left:1714.00px;letter-spacing:0.200px;z-index:6"><span style="color:#6b6b6b">Author(s):</span> Peter Ashton, David Lee</div>
<div class="t" id="t63" style="top:1318.07px;font-size:13.5px;color:#1d1d1d;font-weight:normal;left:1714.00px;letter-spacing:0.200px;z-index:6"><span style="color:#6b6b6b">Format:</span> Review</div>
<div class="t" id="t64" style="top:1366.04px;font-size:18.5px;color:#5e8262;font-weight:normal;left:1714.00px;letter-spacing:-0.205px;z-index:6">Developing Techniques for Direct-seeding for</div>
<div class="t" id="t65" style="top:1392.04px;font-size:18.5px;color:#5e8262;font-weight:normal;left:1714.00px;letter-spacing:-0.308px;z-index:6">Forest Restoration in Northern Thailand</div>
<div class="t" id="t66" style="top:1422.57px;font-size:13.5px;color:#1d1d1d;font-weight:normal;left:1714.00px;letter-spacing:0.200px;z-index:6"><span style="color:#6b6b6b">Publication date:</span> 2023-11</div>
<div class="t" id="t67" style="top:1441.07px;font-size:13.5px;color:#1d1d1d;font-weight:normal;left:1714.00px;letter-spacing:0.200px;z-index:6"><span style="color:#6b6b6b">Publisher:</span> Chiangmai University</div>
</body></html>
